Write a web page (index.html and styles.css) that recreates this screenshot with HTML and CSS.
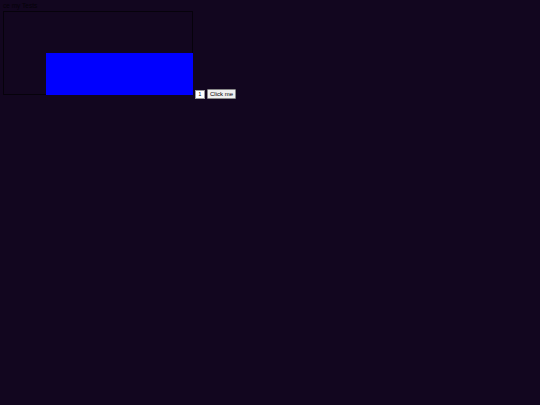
FILE: index.html
```html
<!DOCTYPE html>
<html>
<head>
<meta charset="utf-8">
<link rel="stylesheet" href="styles.css">
</head>
<body>
<div class="title">ce my Tests</div>
<div class="row">
  <div class="box"><div class="blue"></div></div>
  <div class="num">1</div>
  <div class="btn">Click me</div>
</div>
</body>
</html>
```
FILE: styles.css
```css
html, body { margin: 0; padding: 0; background: #12061f; }
body { font-family: "Liberation Sans", Arial, sans-serif; width: 540px; height: 405px; overflow: hidden; }
.title { font-size: 6.5px; line-height: 7px; color: #050208; padding: 2px 0 0 3px; height: 9px; box-sizing: border-box; }
.row { display: flex; align-items: flex-end; padding: 2px 0 0 3px; }
.box { width: 190px; height: 84px; box-sizing: border-box; border: 1px solid #06020b; display: flex; align-items: flex-end; justify-content: flex-end; }
.blue { width: 147px; height: 42px; background: #0000ff; margin: 0 -1px -1px 0; }
.num { width: 10px; height: 9px; box-sizing: border-box; background: #fff; border: 1px solid #999; font-size: 5px; line-height: 7px; text-align: center; color: #000; margin-left: 2px; margin-bottom: -4px; }
.btn { width: 29px; height: 10px; box-sizing: border-box; background: #efefef; border: 1px solid #888; border-radius: 1px; font-size: 6px; line-height: 8px; text-align: center; color: #000; margin-left: 2px; margin-bottom: -4px; }
```
